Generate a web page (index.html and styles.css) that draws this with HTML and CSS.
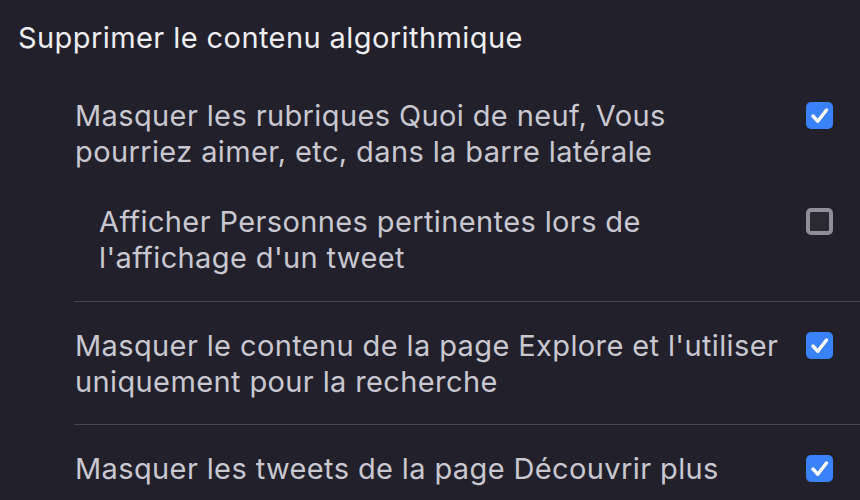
FILE: index.html
```html
<!DOCTYPE html>
<html lang="fr">
<head>
<meta charset="utf-8">
<link rel="stylesheet" href="styles.css">
</head>
<body>
<div class="panel">
  <h2 class="title">Supprimer le contenu algorithmique</h2>
  <div class="group">
    <div class="row first">
      <div class="option">
        <span class="label">Masquer les rubriques Quoi de neuf, Vous<br>pourriez aimer, etc, dans la barre latérale</span>
        <span class="box checked"><svg viewBox="0 0 27 27" width="27" height="27"><path d="M7 14 L11.8 19.3 L20.5 8" fill="none" stroke="#fff" stroke-width="3.4" stroke-linecap="round" stroke-linejoin="round"/></svg></span>
      </div>
      <div class="option sub">
        <span class="label">Afficher Personnes pertinentes lors de<br>l'affichage d'un tweet</span>
        <span class="box"></span>
      </div>
    </div>
    <div class="row">
      <div class="option">
        <span class="label">Masquer le contenu de la page Explore et l'utiliser<br>uniquement pour la recherche</span>
        <span class="box checked"><svg viewBox="0 0 27 27" width="27" height="27"><path d="M7 14 L11.8 19.3 L20.5 8" fill="none" stroke="#fff" stroke-width="3.4" stroke-linecap="round" stroke-linejoin="round"/></svg></span>
      </div>
    </div>
    <div class="row">
      <div class="option">
        <span class="label">Masquer les tweets de la page Découvrir plus</span>
        <span class="box checked"><svg viewBox="0 0 27 27" width="27" height="27"><path d="M7 14 L11.8 19.3 L20.5 8" fill="none" stroke="#fff" stroke-width="3.4" stroke-linecap="round" stroke-linejoin="round"/></svg></span>
      </div>
    </div>
  </div>
</div>
</body>
</html>
```

FILE: styles.css
```css
html, body {
  margin: 0;
  background: #22212b;
}
body {
  font-family: Inter, "Noto Sans", sans-serif;
  font-size: 29px;
  line-height: 36px;
  letter-spacing: 0.38px;
  color: #c9c8d0;
  height: 500px;
  overflow: hidden;
}
.panel {
  padding: 20px 0 0 18px;
}
.title {
  margin: 0;
  font-size: 29px;
  line-height: 36px;
  font-weight: 400;
  letter-spacing: 0.42px;
  color: #eeeef2;
}
.group {
  margin-top: 42px;
  padding-left: 56px;
}
.row {
  border-top: 1px solid #47464e;
  padding: 26px 0 24px 0;
  display: flex;
  flex-direction: column;
  gap: 34px;
}
.row.first {
  border-top: none;
  padding-top: 0;
  padding-bottom: 25px;
}
.option {
  display: flex;
  justify-content: space-between;
  align-items: flex-start;
  padding-left: 1px;
  padding-right: 27px;
}
.option.sub {
  padding-left: 25px;
}
.label {
  display: block;
}
.box {
  flex: none;
  width: 27px;
  height: 27px;
  margin-top: 4px;
  box-sizing: border-box;
  border-radius: 5px;
  border: 4px solid #8f8e99;
  background: #2b2a33;
}
.box.checked {
  border: none;
  background: #3a82f7;
}
.box svg {
  display: block;
}
```
